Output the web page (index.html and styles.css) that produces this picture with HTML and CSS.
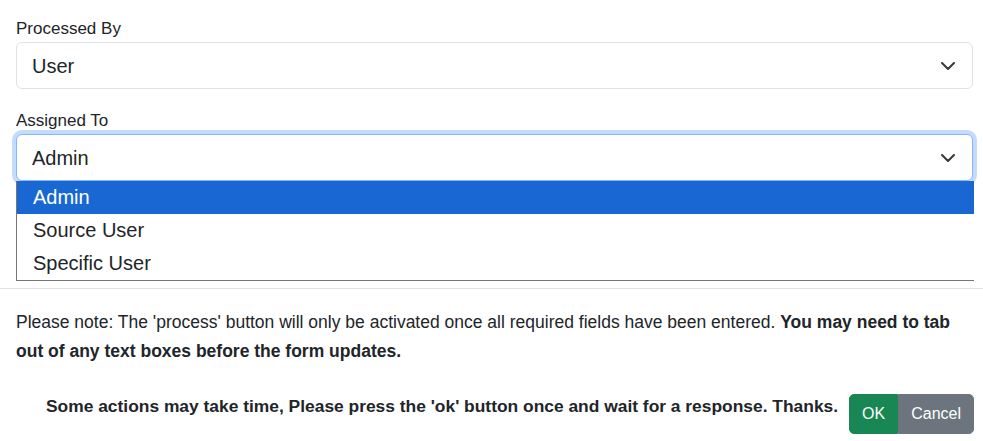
FILE: index.html
```html
<!DOCTYPE html>
<html lang="en">
<head>
<meta charset="utf-8">
<title>Process</title>
<link rel="stylesheet" href="styles.css">
</head>
<body>
<div class="modal-body">
  <div class="field field-first">
    <label class="field-label">Processed By</label>
    <div class="select">
      <span class="select-value">User</span>
      <svg class="chevron" width="14" height="8" viewBox="0 0 14 8"><path d="M1 1l6 6 6-6" fill="none" stroke="#343a40" stroke-width="2" stroke-linecap="round" stroke-linejoin="round"/></svg>
    </div>
  </div>
  <div class="field">
    <label class="field-label">Assigned To</label>
    <div class="select-wrap">
      <div class="select select-focus">
        <span class="select-value">Admin</span>
        <svg class="chevron" width="14" height="8" viewBox="0 0 14 8"><path d="M1 1l6 6 6-6" fill="none" stroke="#343a40" stroke-width="2" stroke-linecap="round" stroke-linejoin="round"/></svg>
      </div>
      <ul class="dropdown">
        <li class="option option-active">Admin</li>
        <li class="option">Source User</li>
        <li class="option">Specific User</li>
      </ul>
    </div>
  </div>
</div>
<div class="modal-footer">
  <p class="note">Please note: The 'process' button will only be activated once all required fields have been entered. <strong>You may need to tab out of any text boxes before the form updates.</strong></p>
  <div class="actions">
    <strong class="actions-text">Some actions may take time, Please press the 'ok' button once and wait for a response. Thanks.</strong>
    <div class="btn-group">
      <button class="btn btn-ok">OK</button>
      <button class="btn btn-cancel">Cancel</button>
    </div>
  </div>
</div>
</body>
</html>
```
FILE: styles.css
```css
* { box-sizing: border-box; }
html, body { margin: 0; padding: 0; background: #fff; }
body {
  font-family: "Liberation Sans", Arial, sans-serif;
  font-size: 17px;
  color: #212529;
  width: 983px;
  height: 441px;
  overflow: hidden;
}
.modal-body {
  padding: 17px 10px 0 16px;
  height: 288px;
}
.field-first { margin-bottom: 20px; }
.field-label {
  display: block;
  line-height: 24px;
  margin-bottom: 1px;
  font-size: 17px;
}
.select-wrap { position: relative; }
.select {
  height: 47px;
  border: 1px solid #dee2e6;
  border-radius: 6px;
  display: flex;
  align-items: center;
  justify-content: space-between;
  padding: 0 17px 0 15px;
  font-size: 20px;
  background: #fff;
}
.select-focus {
  border-color: #86b7fe;
  box-shadow: 0 0 0 4px #c2dbfe;
}
.select-value { line-height: 30px; }
.chevron { display: block; }
.dropdown {
  position: absolute;
  left: 0;
  right: -1px;
  top: 47px;
  margin: 0;
  padding: 0;
  list-style: none;
  background: #fff;
  border-left: 1px solid #767676;
  border-bottom: 1px solid #767676;
  z-index: 2;
}
.option {
  height: 33px;
  line-height: 33px;
  padding-left: 16px;
  font-size: 20px;
  color: #212529;
}
.option-active {
  background: #1967d2;
  color: #fff;
}
.modal-footer {
  border-top: 1px solid #dee2e6;
  padding: 19px 9px 0 16px;
}
.note {
  margin: 0;
  line-height: 29px;
  font-size: 17.5px;
  padding-right: 8px;
}
.actions {
  margin-top: 28px;
  display: flex;
  justify-content: flex-end;
  align-items: flex-start;
  gap: 11px;
}
.actions-text {
  line-height: 24px;
  font-size: 17.4px;
}
.btn-group { display: flex; }
.btn {
  font-family: "Liberation Sans", Arial, sans-serif;
  font-size: 16px;
  line-height: 24px;
  padding: 7px 12px;
  border: 1px solid transparent;
  color: #fff;
  cursor: pointer;
}
.btn-ok {
  background: #198754;
  border-color: #198754;
  border-radius: 5px 0 0 5px;
}
.btn-cancel {
  background: #6c757d;
  border-color: #6c757d;
  border-radius: 0 5px 5px 0;
}
```
